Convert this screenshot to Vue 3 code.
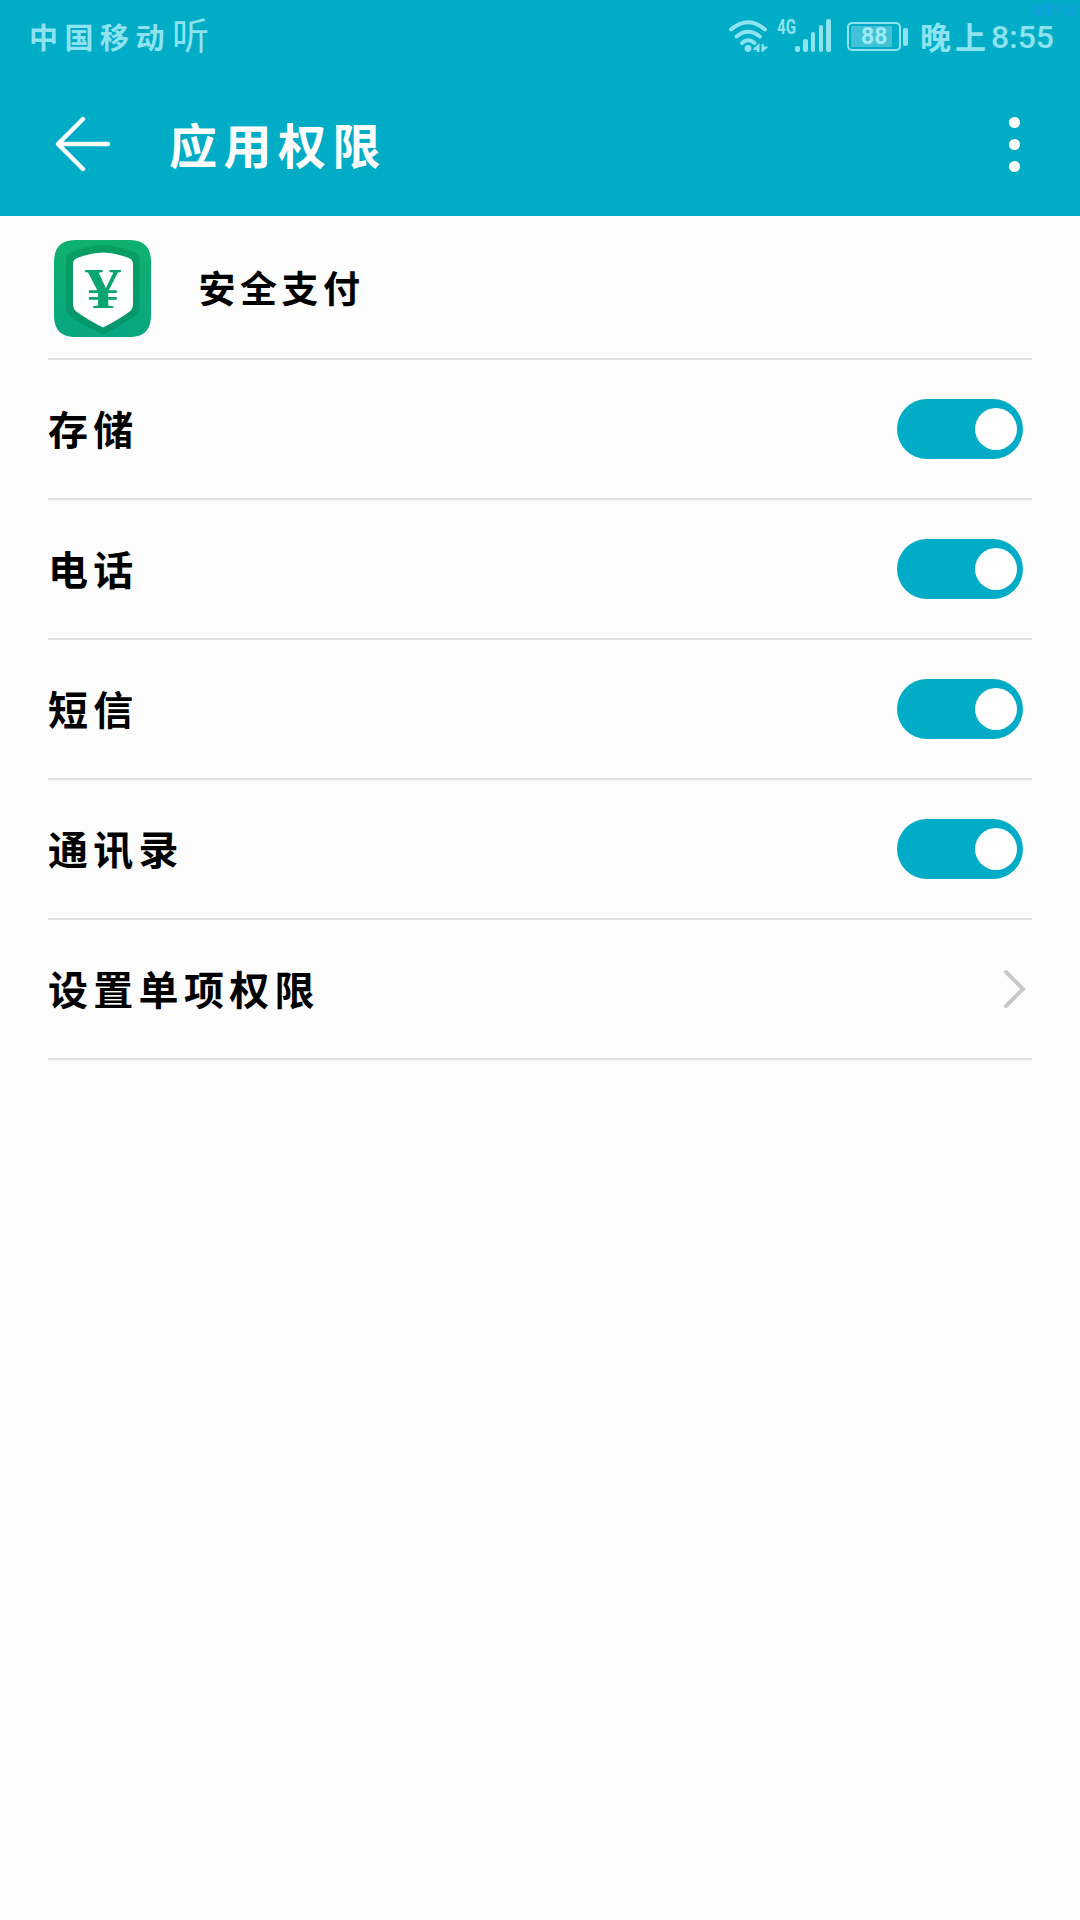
<template>
  <div class="page">
    <header class="top">
      <div class="status-bar">
        <div class="carrier">
          <span class="carrier-name">中国移动</span>
          <span class="hear">听</span>
        </div>
        <div class="status-icons">
          <!-- wifi -->
          <svg class="wifi" width="42" height="34" viewBox="0 0 42 34">
            <g fill="none" stroke="#8ee3f0" stroke-width="4" stroke-linecap="round">
              <path d="M3 9.500Q20 -5 37 9.500" />
              <path d="M8.500 16.500Q20 7 32 16.500" />
              <path d="M14 23Q20 17.500 26.500 23" />
            </g>
            <circle cx="20" cy="28.500" r="3.400" fill="#8ee3f0" />
            <path d="M25.500 28.500L31.500 23V32H28.800V30H25.500zM33.500 24H35.800V26.500H40.500L34.500 32H33.500z" fill="#8ee3f0" />
          </svg>
          <span class="net">4G</span>
          <!-- 信号 -->
          <div class="signal">
            <i v-for="h in signalBars" :key="h" :style="{ height: h + 'px' }"></i>
          </div>
          <div class="battery">
            <div class="battery-box">
              <span class="battery-level">{{ battery }}</span>
            </div>
            <i class="battery-tip"></i>
          </div>
          <div class="time"><span class="period">晚上</span><span>8:55</span></div>
        </div>
        <span class="mark">流星社区</span>
      </div>

      <div class="title-bar">
        <svg class="back" width="56" height="56" viewBox="0 0 56 56">
          <path d="M28 3L3 28L28 53M3 28H53" fill="none" stroke="#fff" stroke-width="4.400" stroke-linecap="round" stroke-linejoin="round" />
        </svg>
        <h1>应用权限</h1>
        <div class="more"><i></i><i></i><i></i></div>
      </div>
    </header>

    <main class="list">
      <div class="row app">
        <svg class="app-icon" width="97" height="97" viewBox="0 0 97 97">
          <defs>
            <linearGradient id="iconBg" x1="0" y1="0" x2="0" y2="1">
              <stop offset="0" stop-color="#0fb16d" />
              <stop offset="1" stop-color="#08a681" />
            </linearGradient>
            <linearGradient id="shieldBg" x1="0" y1="0" x2="0" y2="1">
              <stop offset="0" stop-color="#079f60" />
              <stop offset="1" stop-color="#06966f" />
            </linearGradient>
          </defs>
          <path d="M22 0H75C90 0 97 7 97 22V75C97 90 90 97 75 97H22C7 97 0 90 0 75V22C0 7 7 0 22 0Z" fill="url(#iconBg)" />
          <path d="M49 5Q64 6 80 12Q85 14 85.500 19V68Q85 73 80 77Q66 86 49 95Q31 86 17 77Q12 73 12 68V19Q12 14 17 12Q33 6 49 5Z" fill="url(#shieldBg)" />
          <path d="M49 12.500Q62 13 75 18Q79 20 79 24V64Q79 69 75 72Q64 80 49 87.500Q34 80 23 72Q19 69 19 64V24Q19 20 23 18Q36 13 49 12.500Z" fill="#fff" />
          <text x="49" y="67.500" text-anchor="middle" textLength="36" lengthAdjust="spacingAndGlyphs" class="yen">¥</text>
        </svg>
        <span class="app-name">安全支付</span>
      </div>

      <div v-for="item in permissions" :key="item.name" class="row" @click="item.on = !item.on">
        <span class="label">{{ item.name }}</span>
        <div class="switch" :class="{ off: !item.on }">
          <div class="knob"></div>
        </div>
      </div>

      <div class="row">
        <span class="label">设置单项权限</span>
        <svg class="arrow" width="24" height="40" viewBox="0 0 24 40">
          <path d="M3 3L20 20L3 37" fill="none" stroke="#c8c8c8" stroke-width="4" stroke-linecap="round" />
        </svg>
      </div>
    </main>
  </div>
</template>

<script setup>
import { reactive, ref } from 'vue';

const battery = ref(88);
const signalBars = [6, 13, 20, 27, 33];

const permissions = reactive([
  { name: '存储', on: true },
  { name: '电话', on: true },
  { name: '短信', on: true },
  { name: '通讯录', on: true }
]);
</script>

<style>
body {
  margin: 0;
  background: #fcfcfc;
}
</style>

<style scoped>
.page {
  width: 1080px;
  height: 1920px;
  overflow: hidden;
  background: #fcfcfc;
  color: #000;
  font-family: "Noto Sans CJK SC", sans-serif;
}

.top {
  height: 216px;
  background: #00acc6;
}

/* 状态栏 */
.status-bar {
  position: relative;
  display: flex;
  justify-content: space-between;
  height: 72px;
  padding: 0 26px 0 29px;
  color: #8ee3f0;
}

.carrier {
  display: flex;
  align-items: center;
}

.carrier-name {
  font-size: 29px;
  font-weight: 700;
  letter-spacing: 6.500px;
}

.hear {
  margin-left: 1px;
  padding-bottom: 3px;
  font-size: 37px;
  font-weight: 400;
  line-height: 1;
}

.status-icons {
  display: flex;
  align-items: flex-start;
  padding-top: 19px;
}

.wifi {
  margin-top: 1px;
}

.net {
  width: 18px;
  margin-left: 7px;
  font-family: "Roboto", sans-serif;
  font-size: 21px;
  font-weight: 700;
  line-height: 16px;
  transform: scaleX(0.72);
  transform-origin: left;
}

.signal {
  display: flex;
  align-items: flex-end;
  gap: 3.200px;
  height: 33px;
}

.signal i {
  width: 4.600px;
  border-radius: 2px;
  background: #8ee3f0;
}

.battery {
  display: flex;
  align-items: center;
  gap: 2px;
  margin: 3px 0 0 16px;
}

.battery-box {
  box-sizing: border-box;
  width: 54px;
  height: 29px;
  padding: 2px;
  border: 2px solid #8ee3f0;
  border-radius: 5px;
}

.battery-level {
  display: block;
  width: 41px;
  height: 21px;
  background: #40c1d5;
  color: #9eeaf5;
  font-family: "Roboto", sans-serif;
  font-size: 23px;
  font-weight: 700;
  line-height: 22px;
  text-indent: 10px;
}

.battery-tip {
  width: 5px;
  height: 18px;
  border-radius: 2px;
  background: #8ee3f0;
}

.time {
  display: flex;
  margin-left: 12px;
  font-family: "Roboto", sans-serif;
  font-size: 32px;
  font-weight: 500;
  line-height: 36px;
}

.period {
  width: 71px;
  font-family: "Noto Sans CJK SC", sans-serif;
  font-size: 31px;
  font-weight: 700;
  letter-spacing: 4px;
  line-height: 33px;
}

.mark {
  position: absolute;
  top: 0;
  right: 1px;
  color: #1a98e6;
  font-size: 12px;
  line-height: 18px;
}

/* 标题栏 */
.title-bar {
  display: flex;
  align-items: center;
  height: 144px;
  padding: 0 60px 0 55px;
}

.title-bar h1 {
  flex: 1;
  margin: 0 0 3px 58px;
  color: #fff;
  font-size: 48px;
  font-weight: 700;
  letter-spacing: 6.500px;
  line-height: 60px;
}

.more {
  display: flex;
  flex-direction: column;
  gap: 11px;
}

.more i {
  width: 11px;
  height: 11px;
  border-radius: 50%;
  background: #fff;
}

/* 列表 */
.list {
  padding: 0 48px;
}

.row {
  box-sizing: border-box;
  display: flex;
  align-items: center;
  justify-content: space-between;
  height: 140px;
  padding-right: 9px;
  border-bottom: 2px solid #e2e2e2;
}

.app {
  justify-content: flex-start;
  height: 144px;
  padding-left: 5.500px;
}

.app-icon {
  margin-top: 2px;
}

.yen {
  fill: #0aa571;
  font-family: "Liberation Serif", serif;
  font-size: 58px;
  font-weight: 700;
}

.app-name {
  margin-left: 48px;
  font-size: 37px;
  font-weight: 700;
  letter-spacing: 4.500px;
}

.label {
  padding-bottom: 3px;
  font-size: 40px;
  font-weight: 700;
  letter-spacing: 5.300px;
}

.switch {
  box-sizing: border-box;
  display: flex;
  justify-content: flex-end;
  width: 126px;
  height: 60px;
  padding: 9px 6px;
  border-radius: 30px;
  background: #00acc6;
}

.switch.off {
  justify-content: flex-start;
  background: #c8c8c8;
}

.knob {
  width: 42px;
  height: 42px;
  border-radius: 50%;
  background: #fff;
}

.arrow {
  margin-right: -4px;
}
</style>
